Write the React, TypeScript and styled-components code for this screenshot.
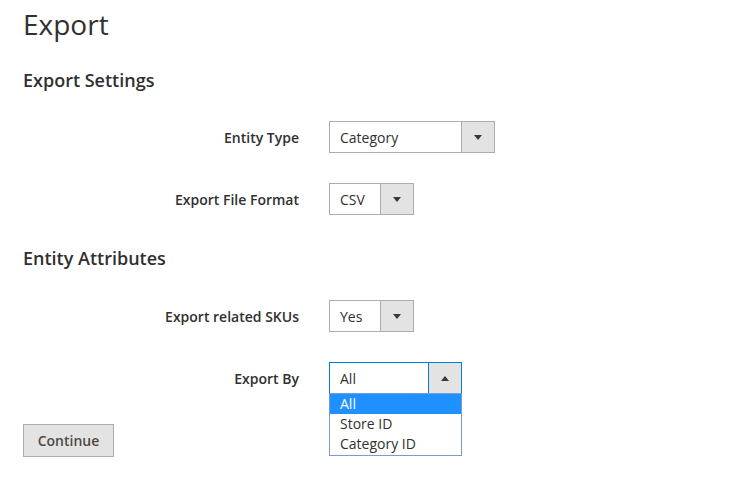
import React from "react";
import styled, { createGlobalStyle } from "styled-components";

const Global = createGlobalStyle`
  html, body { margin: 0; padding: 0; background: #fff; }
  body { font-family: "Open Sans", "Liberation Sans", sans-serif; color: #41362f; }
`;

const Page = styled.div`
  padding: 5px 23px 0 23px;
`;

const Title = styled.h1`
  margin: 0;
  font-size: 28px;
  line-height: 38px;
  font-weight: 400;
  color: #303030;
`;

const SectionTitle = styled.h2<{ $top: number }>`
  margin: ${(p) => p.$top}px 0 0 0;
  font-size: 18px;
  line-height: 24px;
  font-weight: 600;
  color: #303030;
`;

const Fields = styled.div<{ $top: number }>`
  display: grid;
  grid-template-columns: 276px auto;
  column-gap: 30px;
  row-gap: 30px;
  margin-top: ${(p) => p.$top}px;
  align-items: center;
`;

const Label = styled.label`
  text-align: right;
  font-size: 14px;
  font-weight: 600;
  color: #303030;
`;

const SelectWrap = styled.div`
  position: relative;
  justify-self: start;
`;

const Select = styled.div<{ $width: number; $open?: boolean }>`
  display: flex;
  width: ${(p) => p.$width}px;
  height: 32px;
  box-sizing: border-box;
  border: 1px solid ${(p) => (p.$open ? "#007bdb" : "#adadad")};
  background: #fff;
  font-size: 14px;
  color: #303030;
`;

const Value = styled.div`
  flex: 1;
  display: flex;
  align-items: center;
  padding-left: 10px;
`;

const ArrowBox = styled.div<{ $open?: boolean }>`
  width: 32px;
  display: flex;
  align-items: center;
  justify-content: center;
  background: #e3e3e3;
  border-left: 1px solid ${(p) => (p.$open ? "#007bdb" : "#adadad")};
`;

const Arrow = styled.span<{ $up?: boolean }>`
  width: 0;
  height: 0;
  border-left: 4px solid transparent;
  border-right: 4px solid transparent;
  ${(p) => (p.$up ? "border-bottom: 5px solid #41362f;" : "border-top: 5px solid #41362f;")}
`;

const List = styled.ul`
  position: absolute;
  left: 0;
  top: 31px;
  margin: 0;
  padding: 0 0 1px 0;
  list-style: none;
  width: 100%;
  box-sizing: border-box;
  border: 1px solid #7a9bd0;
  background: #fff;
  z-index: 2;
`;

const Option = styled.li<{ $active?: boolean }>`
  height: 20px;
  line-height: 20px;
  padding-left: 10px;
  font-size: 14px;
  color: ${(p) => (p.$active ? "#fff" : "#303030")};
  background: ${(p) => (p.$active ? "#1e90ff" : "transparent")};
`;

const Button = styled.button`
  margin-top: 30px;
  height: 33px;
  width: 91px;
  box-sizing: border-box;
  border: 1px solid #adadad;
  background: #e3e3e3;
  color: #514943;
  font-family: "Open Sans", "Liberation Sans", sans-serif;
  font-size: 14px;
  font-weight: 600;
  padding: 0;
`;

type Field = { label: string; value: string; width: number; open?: boolean; options?: string[] };

const SelectField: React.FC<Field> = ({ label, value, width, open, options }) => (
  <>
    <Label>{label}</Label>
    <SelectWrap>
      <Select $width={width} $open={open}>
        <Value>{value}</Value>
        <ArrowBox $open={open}>
          <Arrow $up={open} />
        </ArrowBox>
      </Select>
      {open && options && (
        <List>
          {options.map((o, i) => (
            <Option key={o} $active={i === 0}>
              {o}
            </Option>
          ))}
        </List>
      )}
    </SelectWrap>
  </>
);

export default function App() {
  return (
    <>
      <Global />
      <Page>
        <Title>Export</Title>
        <SectionTitle $top={25}>Export Settings</SectionTitle>
        <Fields $top={29}>
          <SelectField label="Entity Type" value="Category" width={166} />
          <SelectField label="Export File Format" value="CSV" width={85} />
        </Fields>
        <SectionTitle $top={31}>Entity Attributes</SectionTitle>
        <Fields $top={30}>
          <SelectField label="Export related SKUs" value="Yes" width={85} />
          <SelectField
            label="Export By"
            value="All"
            width={133}
            open
            options={["All", "Store ID", "Category ID"]}
          />
        </Fields>
        <Button>Continue</Button>
      </Page>
    </>
  );
}
